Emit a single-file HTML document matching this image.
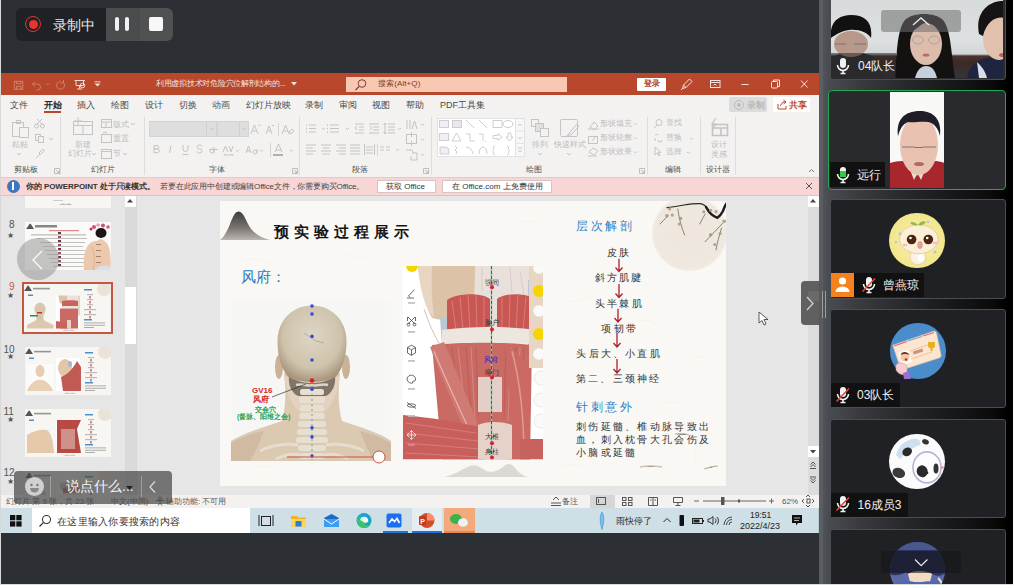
<!DOCTYPE html>
<html><head><meta charset="utf-8">
<style>
*{box-sizing:border-box;margin:0;padding:0}
html,body{width:1013px;height:585px;overflow:hidden;background:#2c2f33;font-family:"Liberation Sans",sans-serif;}
.a{position:absolute}
.t{position:absolute;white-space:nowrap;line-height:1}
</style></head><body>
<div class="a" style="left:0;top:0;width:1px;height:585px;background:#d8d8d8"></div>

<!-- recording widget -->
<div class="a" style="left:16px;top:8px;width:157px;height:33px;border-radius:6px;overflow:hidden;background:#202124">
  <div class="a" style="left:90px;top:0;width:34px;height:33px;background:#4b4c4e"></div>
  <div class="a" style="left:124px;top:0;width:33px;height:33px;background:#505153"></div>
</div>
<div class="a" style="left:25px;top:16px;width:16px;height:16px;border-radius:50%;border:1.5px solid #e03a32"></div>
<div class="a" style="left:28.5px;top:19.5px;width:9px;height:9px;border-radius:50%;background:#e8342d"></div>
<div class="t" style="left:53px;top:17.5px;font-size:14px;color:#e8e8e8">录制中</div>
<div class="a" style="left:115px;top:17.3px;width:4px;height:13.5px;border-radius:2px;background:#f2f2f2"></div>
<div class="a" style="left:125.3px;top:17.3px;width:4px;height:13.5px;border-radius:2px;background:#f2f2f2"></div>
<div class="a" style="left:148.5px;top:17px;width:14px;height:14px;border-radius:2px;background:#f7f7f7"></div>

<!-- PPT window -->
<div class="a" style="left:1px;top:73px;width:818px;height:460px;background:#f3f2f1"></div>
<!-- title bar -->
<div class="a" style="left:1px;top:73px;width:818px;height:22px;background:#b8472b"></div>
<svg class="a" style="left:1px;top:73px" width="818" height="22">
 <g fill="none" stroke="#d0806c" stroke-width="1">
  <rect x="13.3" y="8.3" width="8.5" height="8"/>
  <path d="M15.5 16.3v-3h4.5v3M15.5 8.3v2.5h4.5v-2.5"/>
  <path d="M34 8.5l-2.5 2.5 2.5 2.5M31.5 11h5a3 3 0 0 1 0 6h-1"/>
  <path d="M45 10.5l1.5 1.5 1.5-1.5"/>
  <path d="M62.5 9.5a4 4 0 1 1-3-1.3M62.5 7v3h-3"/>
 </g>
 <g fill="none" stroke="#f2dcd5" stroke-width="1">
  <path d="M73.5 7.5h10.5M75 7.5v5h7.5v-5M78.5 12.5v3M76 16h5"/>
  <circle cx="81.5" cy="12.5" r="2.3"/>
 </g>
 <path d="M93.5 10.5h6l-3 3z" fill="#f2dcd5"/>
 <path d="M93.5 8.8h6" stroke="#f2dcd5" stroke-width="0.9"/>
</svg>
<div class="t" style="left:156px;top:80px;font-size:8px;letter-spacing:-0.27px;color:#f6e4de">利用虚拟技术对危险穴位解剖结构的...</div>
<svg class="a" style="left:291px;top:82px" width="6" height="4"><path d="M0 0h6l-3 3.5z" fill="#f6e4de"/></svg>
<div class="a" style="left:346px;top:77px;width:221px;height:15px;background:#f9c8b3"></div>
<svg class="a" style="left:354px;top:78px" width="14" height="14"><circle cx="8" cy="5.5" r="3.8" fill="none" stroke="#7d3b2c" stroke-width="1"/><path d="M5.2 8.3L1.5 12" stroke="#7d3b2c" stroke-width="1.1"/></svg>
<div class="t" style="left:378px;top:80px;font-size:8px;letter-spacing:0.1px;color:#7d3b2c">搜索(Alt+Q)</div>
<div class="a" style="left:637px;top:78px;width:29px;height:13px;background:#fff;border-radius:1px"></div>
<div class="t" style="left:643.5px;top:80px;font-size:8px;color:#a8402a;font-weight:bold">登录</div>
<svg class="a" style="left:676px;top:74px" width="140" height="20">
 <g fill="none" stroke="#f6e4de" stroke-width="1">
  <path d="M6.5 14.5l1-3.5 6-6 2.5 2.5-6 6zM7.5 11l2.5 2.5M5 16l2-2"/>
  <rect x="34.5" y="6.5" width="9.5" height="7"/><path d="M35 8.5h8.5M37.5 11.5l1.5-1.5 1.5 1.5"/>
  <path d="M65.5 10.5h7"/>
  <rect x="95.5" y="7.5" width="6" height="6.5" rx="1"/><path d="M97.5 7.5v-1.5h6v6.5h-2"/>
  <path d="M125 6.5l6.5 7M131.5 6.5l-6.5 7"/>
 </g>
</svg>

<!-- tabs -->
<div class="t" style="left:10px;top:100.5px;font-size:9px;color:#4a4a4a">文件</div>
<div class="t" style="left:44px;top:100.5px;font-size:9px;color:#262626;font-weight:bold">开始</div>
<div class="a" style="left:44px;top:111px;width:17px;height:2px;background:#b8472b"></div>
<div class="t" style="left:77px;top:100.5px;font-size:9px;color:#4a4a4a">插入</div>
<div class="t" style="left:111px;top:100.5px;font-size:9px;color:#4a4a4a">绘图</div>
<div class="t" style="left:145px;top:100.5px;font-size:9px;color:#4a4a4a">设计</div>
<div class="t" style="left:179px;top:100.5px;font-size:9px;color:#4a4a4a">切换</div>
<div class="t" style="left:212px;top:100.5px;font-size:9px;color:#4a4a4a">动画</div>
<div class="t" style="left:246px;top:100.5px;font-size:9px;color:#4a4a4a">幻灯片放映</div>
<div class="t" style="left:305px;top:100.5px;font-size:9px;color:#4a4a4a">录制</div>
<div class="t" style="left:339px;top:100.5px;font-size:9px;color:#4a4a4a">审阅</div>
<div class="t" style="left:372px;top:100.5px;font-size:9px;color:#4a4a4a">视图</div>
<div class="t" style="left:406px;top:100.5px;font-size:9px;color:#4a4a4a">帮助</div>
<div class="t" style="left:440px;top:100.5px;font-size:9px;color:#4a4a4a">PDF工具集</div>
<div class="a" style="left:729px;top:97px;width:38px;height:15px;background:#dcdcdc;border-radius:2px"></div>
<svg class="a" style="left:733px;top:99px" width="12" height="12"><circle cx="6" cy="6" r="4.5" fill="none" stroke="#bdbdbd"/><circle cx="6" cy="6" r="2" fill="#bdbdbd"/></svg>
<div class="t" style="left:747px;top:100.5px;font-size:9px;color:#b9b9b9;font-weight:bold">录制</div>
<div class="a" style="left:773px;top:97px;width:37px;height:15px;background:#fff;border-radius:2px"></div>
<svg class="a" style="left:777px;top:99px" width="10" height="11"><path d="M1 5v5h8v-3M3 7l3-4h3M6.5 1l2.5 2-2.5 2" fill="none" stroke="#b8472b" stroke-width="1"/></svg>
<div class="t" style="left:789px;top:100.5px;font-size:9px;color:#b8472b;font-weight:bold">共享</div>


<!-- ribbon -->
<svg class="a" style="left:0;top:0" width="819" height="200">
 <g stroke="#dedddc" stroke-width="1"><path d="M60.5 117v58M144.5 117v58M299.5 117v58M431.5 117v58M647.5 117v58M700.5 117v58M735.5 117v58"/></g>
 <g fill="none" stroke="#c4c4c4" stroke-width="1">
  <!-- paste -->
  <rect x="12.5" y="122.5" width="11" height="14"/><rect x="16.5" y="120.5" width="4" height="3"/><rect x="19.5" y="127.5" width="9" height="10" fill="#f3f2f1"/>
  <path d="M17 153l2 2 2-2"/>
  <!-- scissors -->
  <circle cx="36.5" cy="126" r="2"/><circle cx="42.5" cy="126" r="2"/><path d="M37 124l5-5M42 124l-5-5"/>
  <rect x="35.5" y="134.5" width="5" height="6"/><rect x="38.5" y="136.5" width="5" height="6" fill="#f3f2f1"/><path d="M49 138l2 2 2-2"/>
  <path d="M36 158l4-4M39 153l4-4 1.5 1.5-4 4z"/>
  <!-- new slide -->
  <rect x="73.5" y="121.5" width="19" height="13"/><path d="M73.5 125.5h19M83 125.5v9M78 117v8M74 121h8"/>
  <path d="M92 153l2 2 2-2"/>
  <rect x="101.5" y="119.5" width="10" height="8"/><path d="M101.5 122h10M106 122v5.5"/>
  <rect x="101.5" y="134.5" width="10" height="8"/><path d="M103 133a3 3 0 0 1 4 0"/>
  <rect x="101.5" y="149.5" width="10" height="9"/><path d="M101.5 151.5h10"/>
  <path d="M131 123l2 2 2-2M123 153l2 2 2-2"/>
  <!-- font combos -->
  <rect x="149.5" y="121.5" width="67" height="15" fill="#dedede" stroke="#d4d4d4"/>
  <rect x="217.5" y="121.5" width="31" height="15" fill="#dedede" stroke="#d4d4d4"/>
  <path d="M206.5 122v14M239.5 122v14" stroke="#d0d0d0"/>
  <path d="M210 128l2 2 2-2M242 128l2 2 2-2"/>
  <path d="M251 134l3.5-9 3.5 9M252.5 131h4M258 126l1.5-1.5 1.5 1.5"/>
  <path d="M266 134l3-8 3 8M267.5 131h3M272 125l1 1 1-1"/>
  <path d="M278.5 123v13" stroke="#d6d6d6"/>
  <path d="M282 134l3.5-9 3.5 9M283.5 131h4M289 132l3-3 2 2-3 3z"/>
  <!-- B I U S -->
  <path d="M154 145.5h3a1.7 1.7 0 0 1 0 3.5h-3zM154 149h3.5a1.8 1.8 0 0 1 0 3.6h-3.5z"/>
  <path d="M171 145.5l-1.5 7.5"/>
  <path d="M183 145v4a2.5 2.5 0 0 0 5 0v-4M182.5 154.5h6"/>
  <path d="M202 146.5a2.5 2 0 1 0-2.5 2.5a2.5 2 0 1 1-2.5 2.5"/>
  <path d="M209 149.5h9M210 151a2 2 0 1 0 4 0a2 2 0 1 0-4 0M214 147v6"/>
  <path d="M223 152l2.5-6 2.5 6M229 146l2 6 2-6M223.5 155h10M224 155l1.5-1M233 155l-1.5-1M236 150l1.5 1.5 1.5-1.5"/>
  <path d="M246 153l2.5-7 2.5 7M247 151h3M255 150a2 2 0 1 0 0.1 0M257 149v4M260 150l1.5 1.5 1.5-1.5"/>
  <path d="M270.5 143v14" stroke="#d6d6d6"/>
  <path d="M275 152l3.5-8 3.5 8M276 150h5M290 150l1.5 1.5 1.5-1.5"/>
  <rect x="273" y="154" width="10" height="2" fill="#b0b0b0" stroke="none"/>
  <!-- paragraph -->
  <path d="M309 125h7M309 128.5h7M309 132h7M330 125h9M330 128.5h9M330 132h9M322 128l1.5 1.5 1.5-1.5M346 128l1.5 1.5 1.5-1.5"/>
  <path d="M306 125h1M306 128.5h1M306 132h1M327 125h1M327 128.5h1M327 132h1" stroke-width="1.5"/>
  <path d="M355 124h9M359 127h5M359 130h5M355 133h9M357 126l-2 2 2 2"/>
  <path d="M369 124h10M373 127h6M373 130h6M369 133h10M370 126l2 2-2 2"/>
  <path d="M388 124h7M388 127h7M388 130h7M388 133h7M385 123v11M383.5 125l1.5-2 1.5 2M383.5 132l1.5 2 1.5-2M398 128l1.5 1.5 1.5-1.5"/>
  <path d="M306 145h10M306 148h7M306 151h10M306 154h7"/>
  <path d="M321 145h10M322.5 148h7M321 151h10M322.5 154h7"/>
  <path d="M336 145h10M339 148h7M336 151h10M339 154h7"/>
  <path d="M350 145h10M350 148h10M350 151h10M350 154h10"/>
  <path d="M364.5 144v11M374.5 144v11M366 147h7M366 150h7M366 153h7"/>
  <path d="M377.5 144v12" stroke="#d6d6d6"/>
  <path d="M380 147h4M386 147h4M380 150h4M386 150h4M396 149l1.5 1.5 1.5-1.5"/>
  <path d="M407 120v9M410 120v9M412 129l2.5-8 2.5 8M421 124l1.5 1.5 1.5-1.5"/>
  <rect x="406.5" y="134.5" width="10" height="9"/><path d="M411.5 132v5M411.5 141v5M421 139l1.5 1.5 1.5-1.5"/>
  <path d="M406 150h6l2 3M412 153h5v7h-6v-4M421 154l1.5 1.5 1.5-1.5"/>
  <!-- gallery -->
  <rect x="437.5" y="118.5" width="78" height="38" fill="#fff" stroke="#e2e2e2"/>
  <rect x="515.5" y="118.5" width="9" height="38" fill="#f7f7f7" stroke="#e2e2e2"/>
  <path d="M515.5 131h9M515.5 143.5h9" stroke="#e2e2e2"/>
  <path d="M518 126l2-2 2 2M518 137l2 2 2-2M518 148h4M518 150l2 2 2-2" stroke="#c8c8c8"/>
  <g stroke="#d0cdd2">
  <rect x="439.5" y="120.5" width="9" height="7" fill="#f3eef3"/><rect x="452.5" y="120.5" width="9" height="7" fill="#ede6ee"/>
  <path d="M466 120l8 8M479 120l8 8M493 120.5h9v7h-9z"/><ellipse cx="508" cy="124" rx="5" ry="3.5"/>
  <rect x="439.5" y="133.5" width="9" height="7" fill="#f3eef3"/>
  <path d="M452 141l4.5-8 4.5 8z M466 134h4v7h5M479 134h4v7M485 141l1 1M493 135.5h5v-2l4 3.5-4 3.5v-2h-5z M508 133h3v4h2l-3.5 4-3.5-4h2z"/>
  <path d="M440 147h5a4 4 0 0 1 4 4v3h-9z" fill="#f3eef3"/>
  <path d="M455 146l2 2-2 2 2 2-1 2M466 147a8 8 0 0 1 7 7M479 154a4 7 0 0 1 8 0M495 146a1.5 1.5 0 0 0-1.5 1.5v2l-1 1 1 1v2a1.5 1.5 0 0 0 1.5 1.5M507 146a1.5 1.5 0 0 1 1.5 1.5v2l1 1-1 1v2a1.5 1.5 0 0 1-1.5 1.5"/>
  </g>
  <!-- arrange / quick style -->
  <rect x="531.5" y="119.5" width="7" height="7"/><rect x="535.5" y="123.5" width="8" height="8" fill="#e0e0e0"/><rect x="540.5" y="128.5" width="8" height="8" fill="#f3f2f1"/>
  <path d="M538 153l2 2 2-2"/>
  <rect x="560.5" y="119.5" width="17" height="17" rx="1"/><path d="M567 136l3-4 7-8 2 2-7 8z" />
  <path d="M567 153l2 2 2-2"/>
  <path d="M590 127l4-5 4 4-4 4zM588 129h11" /><path d="M600 124l0 0"/>
  <rect x="588.5" y="136.5" width="9" height="7"/><path d="M592 141l4-5"/>
  <path d="M589 152l4-4 5 3-4 4zM588 156h9"/>
  <path d="M634 123.5l1.5 1.5 1.5-1.5M634 137.5l1.5 1.5 1.5-1.5M634 151.5l1.5 1.5 1.5-1.5"/>
  <!-- edit -->
  <circle cx="659" cy="122.5" r="3"/><path d="M657 125l-3 3"/>
  <path d="M655 135a2 2 0 0 1 3 0M655 138v3M658 140a2 2 0 1 0 4 0M690 138l1.5 1.5 1.5-1.5"/>
  <path d="M655 147v8l2-2 2 3 1-1-2-2.5h3z"/>
  <path d="M687 152l1.5 1.5 1.5-1.5"/>
  <!-- designer -->
  <path d="M712.5 124.5h15v11h-15zM712.5 128h15M721 128v7.5" stroke-width="1.6"/><path d="M716 118l-4 6h4l-4 6" stroke-width="1.2"/>
  <path d="M809 172l2.5-2.5 2.5 2.5" stroke="#777"/>
  
  <path d="M54.5 168.5h5v5h-5zM56.0 170.0l3 3M59.0 171.0v2h-2M292.5 168.5h5v5h-5zM294.0 170.0l3 3M297.0 171.0v2h-2M423.5 168.5h5v5h-5zM425.0 170.0l3 3M428.0 171.0v2h-2M639.5 168.5h5v5h-5zM641.0 170.0l3 3M644.0 171.0v2h-2" stroke="#b0b0b0" stroke-width="0.8"/>
 </g>
</svg>
<div class="t" style="left:11.5px;top:141px;font-size:8px;color:#bdbdbd">粘贴</div>
<div class="t" style="left:75px;top:140.5px;font-size:8px;color:#bdbdbd">新建</div>
<div class="t" style="left:68px;top:150px;font-size:8px;color:#bdbdbd">幻灯片</div>
<div class="t" style="left:113px;top:120.5px;font-size:8px;color:#bdbdbd">版式</div>
<div class="t" style="left:113px;top:135px;font-size:8px;color:#bdbdbd">重置</div>
<div class="t" style="left:113px;top:150px;font-size:8px;color:#bdbdbd">节</div>
<div class="t" style="left:532px;top:140.5px;font-size:8px;color:#bdbdbd">排列</div>
<div class="t" style="left:554px;top:140.5px;font-size:8px;color:#bdbdbd">快速样式</div>
<div class="t" style="left:600px;top:119.5px;font-size:8px;color:#bdbdbd">形状填充</div>
<div class="t" style="left:600px;top:133.7px;font-size:8px;color:#bdbdbd">形状轮廓</div>
<div class="t" style="left:600px;top:148px;font-size:8px;color:#bdbdbd">形状效果</div>
<div class="t" style="left:666px;top:119.2px;font-size:8px;color:#bdbdbd">查找</div>
<div class="t" style="left:666px;top:134px;font-size:8px;color:#bdbdbd">替换</div>
<div class="t" style="left:666px;top:147.5px;font-size:8px;color:#bdbdbd">选择</div>
<div class="t" style="left:711px;top:140.5px;font-size:8px;color:#bdbdbd">设计</div>
<div class="t" style="left:711px;top:150.5px;font-size:8px;color:#bdbdbd">灵感</div>
<div class="t" style="left:14px;top:166px;font-size:8px;color:#505050">剪贴板</div>
<div class="t" style="left:91px;top:166px;font-size:8px;color:#505050">幻灯片</div>
<div class="t" style="left:209px;top:166px;font-size:8px;color:#505050">字体</div>
<div class="t" style="left:352px;top:166px;font-size:8px;color:#505050">段落</div>
<div class="t" style="left:526px;top:166px;font-size:8px;color:#505050">绘图</div>
<div class="t" style="left:665px;top:166px;font-size:8px;color:#505050">编辑</div>
<div class="t" style="left:706px;top:166px;font-size:8px;color:#505050">设计器</div>

<!-- info bar -->
<div class="a" style="left:1px;top:176.5px;width:818px;height:19px;background:#f8d6d6;border-top:1px solid #eec4c4;border-bottom:1px solid #e9bdbd"></div>
<div class="a" style="left:6.7px;top:179.7px;width:13px;height:13px;border-radius:50%;background:#3a78c2"></div>
<div class="a" style="left:12.3px;top:184.3px;width:2px;height:5.7px;background:#fff"></div><div class="a" style="left:12.3px;top:181.8px;width:2px;height:1.8px;background:#fff"></div>
<div class="t" style="left:26px;top:183px;font-size:8px;letter-spacing:-0.1px;color:#333;font-weight:bold">你的 POWERPOINT 处于只读模式。</div>
<div class="t" style="left:160px;top:183px;font-size:8px;letter-spacing:-0.16px;color:#444">若要在此应用中创建或编辑Office文件，你需要购买Office。</div>
<div class="a" style="left:377px;top:180px;width:59px;height:12.5px;background:#fff;border:1px solid #d9c4c4"></div>
<div class="t" style="left:386px;top:183px;font-size:8px;color:#333">获取 Office</div>
<div class="a" style="left:442px;top:180px;width:110px;height:12.5px;background:#fff;border:1px solid #d9c4c4"></div>
<div class="t" style="left:452px;top:183px;font-size:8px;color:#333">在 Office.com 上免费使用</div>
<svg class="a" style="left:805px;top:182px" width="8" height="8"><path d="M1 1l6 6M7 1l-6 6" stroke="#555" stroke-width="1"/></svg>


<!-- main area -->
<div class="a" style="left:1px;top:195.5px;width:818px;height:299px;background:#e6e6e6"></div>
<!-- thumbnails scrollbar -->
<div class="a" style="left:124.5px;top:195.5px;width:11px;height:299px;background:#dadada"></div>
<div class="a" style="left:124.5px;top:195.5px;width:11px;height:11px;background:#fff"></div>
<svg class="a" style="left:127px;top:199px" width="6" height="4"><path d="M0 3.5h6L3 0z" fill="#444"/></svg>
<div class="a" style="left:124.5px;top:287px;width:11px;height:57px;background:#fff"></div>
<div class="a" style="left:136px;top:195.5px;width:1px;height:299px;background:#d8d8d8"></div>
<!-- main scrollbar -->
<div class="a" style="left:807.5px;top:195.5px;width:11px;height:299px;background:#dcdcdc"></div>
<div class="a" style="left:807.5px;top:195.5px;width:11px;height:11px;background:#fff"></div>
<svg class="a" style="left:810px;top:199px" width="6" height="4"><path d="M0 3.5h6L3 0z" fill="#444"/></svg>
<div class="a" style="left:807.5px;top:446px;width:11px;height:11px;background:#fff"></div>
<svg class="a" style="left:810px;top:450px" width="6" height="4"><path d="M0 0h6L3 3.5z" fill="#444"/></svg>
<svg class="a" style="left:809px;top:459px" width="8" height="30"><g fill="none" stroke="#555" stroke-width="1"><path d="M1.5 5.5l2.5-2.5 2.5 2.5M1.5 8l2.5-2.5 2.5 2.5M1 9.5h6"/><path d="M1.5 19l2.5 2.5 2.5-2.5M1.5 21.5l2.5 2.5 2.5-2.5M1 18h6"/></g></svg>

<!-- thumbnails -->
<svg class="a" style="left:25px;top:195.5px" width="86" height="12.5"><rect width="86" height="12.5" fill="#f8f6f2"/><path d="M34 9 C37 7 39 7 41 8.5 C43 7 45 7 47 9Z" fill="#bbb"/><rect x="28" y="4" width="10" height="1" fill="#ccc"/></svg>
<div class="t" style="left:9px;top:220px;font-size:10px;color:#555">8</div>
<div class="t" style="left:7px;top:232px;font-size:8px;color:#555">★</div>
<svg class="a" style="left:24.5px;top:221.5px" width="86.5" height="48.5">
 <rect width="86.5" height="48.5" fill="#fbfaf8"/>
 <path d="M1 7 C3 5 4 2 5 1.5 C6 1.5 7 4 9 7Z" fill="#555"/>
 <rect x="10" y="3" width="22" height="2.5" fill="#555" opacity="0.7"/>
 <rect x="24" y="8" width="30" height="1.2" fill="#d88" />
 <g fill="#999"><rect x="6" y="12.5" width="55" height="0.8"/><rect x="12" y="16" width="50" height="0.6"/><rect x="15" y="20" width="45" height="0.6"/><rect x="18" y="24" width="40" height="0.6"/><rect x="20" y="28" width="40" height="0.6"/><rect x="22" y="32" width="38" height="0.6"/><rect x="24" y="36" width="36" height="0.6"/><rect x="26" y="40" width="34" height="0.6"/><rect x="28" y="44" width="30" height="0.6"/></g>
 <g fill="#5a3b4a"><rect x="33" y="10" width="3" height="2"/><rect x="33" y="14" width="3" height="2" fill="#c04060"/><rect x="33" y="18" width="3" height="2"/><rect x="33" y="22" width="3" height="2" fill="#c04060"/><rect x="33" y="26" width="3" height="2"/><rect x="33" y="30" width="3" height="2" fill="#c04060"/><rect x="33" y="34" width="3" height="2"/><rect x="33" y="38" width="3" height="2" fill="#c04060"/><rect x="33" y="42" width="3" height="2"/></g>
 <path d="M59 48 C58 40 59 30 62 25 C64 21 68 19 72 19 C74 17 76 16 78 18 C82 20 84 24 85 30 C86 38 86 44 85 48Z" fill="#ecc8ac"/>
 <path d="M66 24 C70 30 70 40 68 48" stroke="#d9ae90" stroke-width="0.8" fill="none"/>
 <path d="M70 48 C72 44 78 43 84 44 L86 48Z" fill="#d8e0ee"/>
 <ellipse cx="76" cy="11" rx="5.5" ry="5" fill="#1c1414"/>
 <g><circle cx="69" cy="5" r="2" fill="#d85070"/><circle cx="73" cy="3" r="1.8" fill="#e8a0b0"/><circle cx="78" cy="3.5" r="2" fill="#c05080"/><circle cx="83" cy="5" r="1.8" fill="#d06070"/><circle cx="66" cy="7" r="1.5" fill="#b04050"/></g>
 <g fill="#6a4a3a" opacity="0.6"><rect x="71" y="22" width="5" height="0.9"/><rect x="71" y="28" width="5" height="0.9"/><rect x="71" y="34" width="5" height="0.9"/><rect x="71" y="40" width="5" height="0.9"/></g>
</svg>
<div class="a" style="left:22.2px;top:281.6px;width:90.7px;height:52.8px;border:2px solid #c4573f"></div>
<div class="t" style="left:9px;top:282px;font-size:10px;color:#c75a3c">9</div>
<div class="t" style="left:7px;top:292px;font-size:8px;color:#555">★</div>
<svg class="a" style="left:24.2px;top:283.6px" width="86.5" height="48.8"><rect width="86.5" height="48.8" fill="#f8f6f2"/><circle cx="80" cy="5" r="7" fill="#ece3d8"/><path d="M0 7 C2 5 3 2 4 1.5 C5 1.5 6 4 8 7Z" fill="#555"/><rect x="9" y="3.8" width="17" height="1.6" fill="#555" opacity="0.6"/><rect x="4" y="10.5" width="5" height="1.5" fill="#4a8fd0"/><rect x="3" y="17.5" width="26.5" height="27" fill="#f7f7f6"/><path d="M3 44.5 L3 41 C8 38 12 37 13 35 L19 35 C20 37 24 38 29.5 41 L29.5 44.5Z" fill="#dcc8ae"/><rect x="12.5" y="30" width="7" height="6" fill="#d8c4aa"/><ellipse cx="16" cy="25.5" rx="5.5" ry="7" fill="#d6c8b0"/><rect x="32" y="11.5" width="24" height="33" fill="#fff"/><path d="M34.5 11.5 L43 11.5 L43 19 C40 20 37 20 35.5 19Z" fill="#dcc3a8"/><path d="M43 11.5 L54 11.5 L54 19 L43 19Z" fill="#ebe0dc"/><path d="M38 17 C42 16 52 16 54 17 L54 22 L38 22Z" fill="#c9625e"/><rect x="38" y="22" width="16" height="2.5" fill="#ece4dc"/><path d="M36 24.5 L54 24.5 L54 44.5 L36 44.5Z" fill="#c96a66"/><path d="M32 37 L44 39 L44 44.5 L32 44.5Z" fill="#c8625e"/><rect x="43" y="36" width="4" height="8.5" fill="#e6d2c8"/><rect x="54" y="11.5" width="2" height="20" fill="#e9d6c2"/><rect x="13" y="28" width="5" height="1.5" fill="#d42a20"/><rect x="6" y="31" width="8" height="1.5" fill="#2a9050"/><rect x="60" y="5" width="8" height="1.5" fill="#4a8fd0"/><rect x="63.0" y="10" width="6" height="1.2" fill="#888" opacity="0.55"/><rect x="65.5" y="12" width="1" height="2.5" fill="#b01e2e"/><rect x="63.0" y="15" width="6" height="1.2" fill="#888" opacity="0.55"/><rect x="65.5" y="17" width="1" height="2.5" fill="#b01e2e"/><rect x="63.0" y="20" width="6" height="1.2" fill="#888" opacity="0.55"/><rect x="65.5" y="22" width="1" height="2.5" fill="#b01e2e"/><rect x="60.0" y="25" width="12" height="1.2" fill="#888" opacity="0.55"/><rect x="65.5" y="27" width="1" height="2.5" fill="#b01e2e"/><rect x="60.0" y="30" width="12" height="1.2" fill="#888" opacity="0.55"/><rect x="65.5" y="32" width="1" height="2.5" fill="#b01e2e"/><rect x="60" y="35" width="8" height="1.5" fill="#4a8fd0"/><rect x="60" y="38.5" width="21" height="0.8" fill="#999"/><rect x="60" y="40.8" width="21" height="0.8" fill="#999"/><rect x="60" y="43" width="10" height="0.8" fill="#999"/><path d="M38 47 C41 45 43 45 45 46.5 C47 45 49 45 51 47Z" fill="#ccc"/></svg>
<div class="t" style="left:3.5px;top:344.5px;font-size:10px;color:#555">10</div>
<div class="t" style="left:7px;top:353px;font-size:8px;color:#555">★</div>
<svg class="a" style="left:24.5px;top:346.5px" width="86" height="48"><rect width="86" height="48" fill="#f8f6f2"/><circle cx="80" cy="5" r="7" fill="#ece3d8"/><path d="M0 7 C2 5 3 2 4 1.5 C5 1.5 6 4 8 7Z" fill="#555"/><rect x="9" y="3.8" width="17" height="1.6" fill="#555" opacity="0.6"/><rect x="4" y="10.5" width="5" height="1.5" fill="#4a8fd0"/><rect x="2" y="17" width="27" height="27" fill="#f6f6f5"/><rect x="2" y="17" width="27" height="27" fill="#fbfbfa"/><ellipse cx="15" cy="24" rx="4.5" ry="6" fill="#e6cdb0"/><path d="M2 44 C4 38 8 35 12 33 L18 33 C22 35 26 38 28 44Z" fill="#e8d0b4"/><rect x="31" y="11" width="24" height="33" fill="#fff"/><ellipse cx="40" cy="21" rx="7" ry="9" fill="#e2c6a8"/><path d="M36 30 C42 28 48 22 52 14 L56 20 L56 44 L38 44Z" fill="#c05a54"/><ellipse cx="45" cy="17" rx="2" ry="3" fill="#9fb8d6"/><rect x="60" y="5" width="8" height="1.5" fill="#4a8fd0"/><rect x="63.0" y="10" width="6" height="1.2" fill="#888" opacity="0.55"/><rect x="65.5" y="12" width="1" height="2.5" fill="#b01e2e"/><rect x="63.0" y="15" width="6" height="1.2" fill="#888" opacity="0.55"/><rect x="65.5" y="17" width="1" height="2.5" fill="#b01e2e"/><rect x="63.0" y="20" width="6" height="1.2" fill="#888" opacity="0.55"/><rect x="65.5" y="22" width="1" height="2.5" fill="#b01e2e"/><rect x="60.0" y="25" width="12" height="1.2" fill="#888" opacity="0.55"/><rect x="65.5" y="27" width="1" height="2.5" fill="#b01e2e"/><rect x="60.0" y="30" width="12" height="1.2" fill="#888" opacity="0.55"/><rect x="65.5" y="32" width="1" height="2.5" fill="#b01e2e"/><rect x="60" y="35" width="8" height="1.5" fill="#4a8fd0"/><rect x="60" y="38.5" width="21" height="0.8" fill="#999"/><rect x="60" y="40.8" width="21" height="0.8" fill="#999"/><rect x="60" y="43" width="10" height="0.8" fill="#999"/><path d="M38 47 C41 45 43 45 45 46.5 C47 45 49 45 51 47Z" fill="#ccc"/></svg>
<div class="t" style="left:3.5px;top:407px;font-size:10px;color:#555">11</div>
<div class="t" style="left:7px;top:416px;font-size:8px;color:#555">★</div>
<svg class="a" style="left:24.5px;top:408.8px" width="86" height="48"><rect width="86" height="48" fill="#f8f6f2"/><circle cx="80" cy="5" r="7" fill="#ece3d8"/><path d="M0 7 C2 5 3 2 4 1.5 C5 1.5 6 4 8 7Z" fill="#555"/><rect x="9" y="3.8" width="17" height="1.6" fill="#555" opacity="0.6"/><rect x="4" y="10.5" width="5" height="1.5" fill="#4a8fd0"/><rect x="2" y="17" width="27" height="27" fill="#f6f6f5"/><path d="M2 44 L2 26 C8 22 16 20 22 21 C26 24 28 30 29 44Z" fill="#e6c9aa"/><rect x="31" y="11" width="24" height="33" fill="#fff"/><path d="M32 11 L56 11 L52 20 L56 44 L32 44Z" fill="#b84a46"/><path d="M36 20 L50 20 L50 40 L36 40Z" fill="#e8d8d0" opacity="0.5"/><rect x="60" y="5" width="8" height="1.5" fill="#4a8fd0"/><rect x="63.0" y="10" width="6" height="1.2" fill="#888" opacity="0.55"/><rect x="65.5" y="12" width="1" height="2.5" fill="#b01e2e"/><rect x="63.0" y="15" width="6" height="1.2" fill="#888" opacity="0.55"/><rect x="65.5" y="17" width="1" height="2.5" fill="#b01e2e"/><rect x="63.0" y="20" width="6" height="1.2" fill="#888" opacity="0.55"/><rect x="65.5" y="22" width="1" height="2.5" fill="#b01e2e"/><rect x="60.0" y="25" width="12" height="1.2" fill="#888" opacity="0.55"/><rect x="65.5" y="27" width="1" height="2.5" fill="#b01e2e"/><rect x="60.0" y="30" width="12" height="1.2" fill="#888" opacity="0.55"/><rect x="65.5" y="32" width="1" height="2.5" fill="#b01e2e"/><rect x="60" y="35" width="8" height="1.5" fill="#4a8fd0"/><rect x="60" y="38.5" width="21" height="0.8" fill="#999"/><rect x="60" y="40.8" width="21" height="0.8" fill="#999"/><rect x="60" y="43" width="10" height="0.8" fill="#999"/><path d="M38 47 C41 45 43 45 45 46.5 C47 45 49 45 51 47Z" fill="#ccc"/></svg>
<div class="t" style="left:3.5px;top:467.5px;font-size:10px;color:#555">12</div>
<div class="t" style="left:7px;top:478px;font-size:8px;color:#555">★</div>
<div class="a" style="left:24.5px;top:470.5px;width:86px;height:24px;overflow:hidden"><svg class="a" style="left:0px;top:0px" width="86" height="48"><rect width="86" height="48" fill="#f8f6f2"/><circle cx="80" cy="5" r="7" fill="#ece3d8"/><path d="M0 7 C2 5 3 2 4 1.5 C5 1.5 6 4 8 7Z" fill="#555"/><rect x="9" y="3.8" width="17" height="1.6" fill="#555" opacity="0.6"/><rect x="4" y="10.5" width="5" height="1.5" fill="#4a8fd0"/><rect x="3" y="17.5" width="26.5" height="27" fill="#f7f7f6"/><path d="M3 44.5 L3 41 C8 38 12 37 13 35 L19 35 C20 37 24 38 29.5 41 L29.5 44.5Z" fill="#dcc8ae"/><rect x="12.5" y="30" width="7" height="6" fill="#d8c4aa"/><ellipse cx="16" cy="25.5" rx="5.5" ry="7" fill="#d6c8b0"/><rect x="32" y="11.5" width="24" height="33" fill="#fff"/><path d="M34.5 11.5 L43 11.5 L43 19 C40 20 37 20 35.5 19Z" fill="#dcc3a8"/><path d="M43 11.5 L54 11.5 L54 19 L43 19Z" fill="#ebe0dc"/><path d="M38 17 C42 16 52 16 54 17 L54 22 L38 22Z" fill="#c9625e"/><rect x="38" y="22" width="16" height="2.5" fill="#ece4dc"/><path d="M36 24.5 L54 24.5 L54 44.5 L36 44.5Z" fill="#c96a66"/><path d="M32 37 L44 39 L44 44.5 L32 44.5Z" fill="#c8625e"/><rect x="43" y="36" width="4" height="8.5" fill="#e6d2c8"/><rect x="54" y="11.5" width="2" height="20" fill="#e9d6c2"/><rect x="13" y="28" width="5" height="1.5" fill="#d42a20"/><rect x="6" y="31" width="8" height="1.5" fill="#2a9050"/><rect x="60" y="5" width="8" height="1.5" fill="#4a8fd0"/><rect x="63.0" y="10" width="6" height="1.2" fill="#888" opacity="0.55"/><rect x="65.5" y="12" width="1" height="2.5" fill="#b01e2e"/><rect x="63.0" y="15" width="6" height="1.2" fill="#888" opacity="0.55"/><rect x="65.5" y="17" width="1" height="2.5" fill="#b01e2e"/><rect x="63.0" y="20" width="6" height="1.2" fill="#888" opacity="0.55"/><rect x="65.5" y="22" width="1" height="2.5" fill="#b01e2e"/><rect x="60.0" y="25" width="12" height="1.2" fill="#888" opacity="0.55"/><rect x="65.5" y="27" width="1" height="2.5" fill="#b01e2e"/><rect x="60.0" y="30" width="12" height="1.2" fill="#888" opacity="0.55"/><rect x="65.5" y="32" width="1" height="2.5" fill="#b01e2e"/><rect x="60" y="35" width="8" height="1.5" fill="#4a8fd0"/><rect x="60" y="38.5" width="21" height="0.8" fill="#999"/><rect x="60" y="40.8" width="21" height="0.8" fill="#999"/><rect x="60" y="43" width="10" height="0.8" fill="#999"/><path d="M38 47 C41 45 43 45 45 46.5 C47 45 49 45 51 47Z" fill="#ccc"/></svg></div>


<!-- slide -->
<div class="a" style="left:220px;top:201px;width:506px;height:284.5px;background:#f9f8f4;overflow:hidden">
<svg class="a" style="left:0;top:0" width="506" height="285">
 <defs>
  <linearGradient id="mtn" x1="0" y1="0" x2="0" y2="1"><stop offset="0" stop-color="#2e2a2a"/><stop offset="0.55" stop-color="#6b6662"/><stop offset="1" stop-color="#b5b0aa"/></linearGradient>
  <radialGradient id="skull" cx="0.5" cy="0.4" r="0.6"><stop offset="0" stop-color="#ddd6c6"/><stop offset="0.7" stop-color="#cfc3ac"/><stop offset="1" stop-color="#a8967c"/></radialGradient>
  <linearGradient id="skin" x1="0" y1="0" x2="0" y2="1"><stop offset="0" stop-color="#d9c2a6"/><stop offset="1" stop-color="#e6d3bc"/></linearGradient>
  <radialGradient id="moon" cx="0.5" cy="0.5" r="0.5"><stop offset="0" stop-color="#eee6dc"/><stop offset="0.93" stop-color="#efe8df"/><stop offset="1" stop-color="#f2ede6"/></radialGradient>
 </defs>
 <!-- paper fibers -->
 <g stroke="#e8e2d8" stroke-width="0.5" fill="none" opacity="0.5">
  <path d="M20 60q15 -5 30 2M120 50q10 8 25 6M300 20q12 4 20 -3M250 70q8 10 22 8M200 95q-10 6 -18 16M420 120q10 -3 18 4M470 150q6 8 16 6M340 265q14 -4 26 3M30 270q10 -8 22 -4M480 240q-8 10 -4 20M150 30q10 3 14 10M60 150q-6 10 2 18M350 100q10 2 20 -6M440 200q12 4 20 0"/>
 </g>
 <path d="M190 230l14 -1" stroke="#cfc2ae" stroke-width="1.2"/>
 <path d="M420 266q10 -2 22 0" stroke="#d2c4ae" stroke-width="1.4"/>
 <path d="M188 230q10 -1 22 0" stroke="#c9b89c" stroke-width="1.2"/>
 <path d="M455 233q8 -1 14 1" stroke="#c9b89c" stroke-width="1.2"/>
 <path d="M484 268q8 -3 14 -3" stroke="#c9b89c" stroke-width="1.2"/>
 <!-- top-left mountain -->
 <path d="M0 39 C3 37 7 31 10 23 C13 15 15.5 10.5 18.5 10.5 C21.5 10.5 24 14 27 21 C31 30 38 36 50 39 Z" fill="url(#mtn)" opacity="0.92"/>
 <!-- moon -->
 <circle cx="469.5" cy="32.5" r="37.5" fill="url(#moon)"/>
 <!-- branch -->
 <g fill="none" stroke-linecap="round">
  <path d="M447 6.6 C452 6 458 5 464 4 C470 3 476 2.4 480 2.6 C484 3 486 5 488 8 C490 12 493 15 497.4 16.8" stroke="#2e2824" stroke-width="1.2"/>
  <path d="M486 6 C488 10 492 15 497.4 16.8 C500 15 502 12 503 10 C504 7 505 4 507 2" stroke="#221c18" stroke-width="2.4"/>
  <path d="M448 14.8 L440 23 M457.8 8 C459 16 461 26 464.6 33.9 M485.1 13 L479.6 23 M502.9 22 L485.1 40.7 M501.5 27 C499 36 497 42 496 48.9" stroke="#4a4038" stroke-width="0.6"/>
 </g>
 <g fill="#a8987a" opacity="0.85">
  <circle cx="449.6" cy="7.9" r="1.6"/><circle cx="446.9" cy="14.8" r="1.8"/><circle cx="452.3" cy="14.1" r="1.6"/><circle cx="460.5" cy="17.5" r="1.8"/><circle cx="459.2" cy="23" r="1.5"/><circle cx="483.7" cy="10.7" r="1.5"/><circle cx="490.6" cy="9.3" r="1.6"/><circle cx="496" cy="10.7" r="1.6"/><circle cx="504.2" cy="20.2" r="1.8"/><circle cx="490.6" cy="33.9" r="1.8"/><circle cx="494.7" cy="43.4" r="1.5"/><circle cx="500.1" cy="32.5" r="1.5"/>
 </g>
 <!-- bottom mountains -->
 <path d="M224 276 C235 274 242 268 250 265 C256 263 260 266 266 270 C272 272 278 270 283 266 C287 262 291 262 295 267 C299 272 303 275 308 276 Z" fill="#d6d3ce" opacity="0.85"/>

 <!-- head image -->
 <rect x="11" y="100" width="160" height="160" fill="#f6f6f5"/>
 <path d="M11 260 L11 240 C24 232 44 226 62 220 C66 205 66 190 64 172 L120 172 C118 190 118 205 122 220 C140 226 160 232 171 240 L171 260 Z" fill="#dcc9b2"/>
 <path d="M64 175 C68 200 76 214 92 214 C108 214 116 200 120 175 Z" fill="#e3d5c2" opacity="0.8"/>
 <path d="M11 260 L11 242 C22 236 32 232 44 230 C40 240 36 250 30 260Z" fill="#cdb89e" opacity="0.8"/>
 <path d="M171 260 L171 242 C160 236 150 232 140 230 C144 240 148 250 154 260Z" fill="#cdb89e" opacity="0.8"/>
 <ellipse cx="59" cy="166" rx="4" ry="12" fill="#cbb296"/>
 <ellipse cx="126" cy="166" rx="4" ry="12" fill="#cbb296"/>
 <path d="M92 104.5 C72 104.5 57.5 120 57.5 140 C57.5 156 61 166 68 176 C76 180 86 181 92 181 C98 181 108 180 116 176 C123 166 126.5 156 126.5 140 C126.5 120 112 104.5 92 104.5 Z" fill="url(#skull)"/>
 <path d="M69 176 C78 181 86 182 92 182 C98 182 106 181 115 176 C116 184 112 192 106 195 L78 195 C72 192 68 184 69 176Z" fill="#6f6456" opacity="0.85"/>
 <path d="M76 184 C82 182 88 186 92 184 C96 186 102 182 108 184" stroke="#ddd6c8" stroke-width="2.5" fill="none"/>
 <g fill="#e6e0d2">
  <rect x="80" y="188" width="24" height="6" rx="2.5"/><rect x="79" y="196" width="26" height="6" rx="2.5"/><rect x="80" y="204" width="24" height="6" rx="2.5"/><rect x="79" y="212" width="26" height="6" rx="2.5"/><rect x="78" y="220" width="28" height="6" rx="2.5"/><rect x="77" y="228" width="30" height="6" rx="2.5"/><rect x="76" y="236" width="32" height="6" rx="2.5"/><rect x="78" y="244" width="28" height="6" rx="2.5"/><rect x="80" y="252" width="24" height="6" rx="2.5"/>
 </g>
 <path d="M92 188 V259" stroke="#9a8e7c" stroke-width="1" stroke-dasharray="2 3"/>
 <path d="M40 250 C52 244 66 242 78 244 M144 250 C132 244 118 242 106 244 M56 258 C64 254 72 252 80 254 M128 258 C120 254 112 252 104 254" stroke="#e4ddd0" stroke-width="3" fill="none"/>
 <path d="M84 132l12 8 8 2" stroke="#a89478" stroke-width="0.6" fill="none"/>
 <path d="M52 196 L86 183" stroke="#333" stroke-width="0.7"/>
 <g fill="#3a46e0">
  <circle cx="92" cy="105" r="1.8"/><circle cx="92" cy="113" r="1.8"/><circle cx="92" cy="135.4" r="1.8"/><circle cx="92" cy="159" r="1.8"/><circle cx="92" cy="188.3" r="1.8"/><circle cx="92" cy="226.7" r="1.8"/><circle cx="92" cy="236" r="1.8"/><circle cx="92" cy="255" r="1.8"/>
 </g>
 <circle cx="92" cy="179.6" r="2.4" fill="#e02020"/>
 <path d="M67 256 H153" stroke="#d05040" stroke-width="1"/>
 <circle cx="159" cy="256" r="6" fill="#fff" stroke="#d05040" stroke-width="1"/>

 <!-- muscle image -->
 <clipPath id="mclip"><rect x="183" y="65" width="140" height="193.5"/></clipPath>
 <g clip-path="url(#mclip)">
 <rect x="183" y="65" width="140" height="193.5" fill="#ffffff"/>
 <path d="M250 65 L317 65 L317 140 L225 140 C235 120 246 95 250 65 Z" fill="#e9dfdb"/>
 <path d="M262 66 L262 90 M290 66 L292 92 M300 70 L304 95" stroke="#d8ccc8" stroke-width="1"/>
 <path d="M198 65 L255 65 C255 85 254 105 250 118 C240 121 224 120 212 117 C205 105 200 85 198 65 Z" fill="#dcc3a8"/>
 <path d="M198 65 L212 65 C211 85 212 100 214 116 C206 110 200 90 198 65 Z" fill="#e8d6c2"/>
 <path d="M220 117 L234 117 L234 145 L222 145 Z" fill="#b8c8d6"/>
 <path d="M308 79 L317 79 L317 145 L308 145 Z" fill="#b8c8d6"/>
 <path d="M204 108 C210 125 216 140 226 152" stroke="#c9b29c" stroke-width="0.8" fill="none"/>
 <path d="M227 99 C236 92 262 91 270 98 L270 131 C258 133 238 133 227 131 Z" fill="#c95854"/>
 <path d="M277 98 C286 91 308 92 317 99 L317 131 C304 133 288 133 277 131 Z" fill="#c95854"/>
 <g stroke="#e49a92" stroke-width="0.8" opacity="0.7"><path d="M232 100l4 30M240 96l3 34M248 94l2 36M256 94l1 36M264 96l0 34M282 96l0 34M290 94l-1 36M298 94l-2 36M306 96l-3 34M313 99l-3 32"/></g>
 <path d="M222 129 C250 125 290 125 317 129 L317 144 C300 141 280 145 270 142 C255 145 240 141 222 145 Z" fill="#ede6de"/>
 <path d="M212 144 C240 141 290 141 312 144 L310 258.5 L222 258.5 Z" fill="#ca6a65"/>
 <g stroke="#b04844" stroke-width="1.2" opacity="0.35"><path d="M232 146l10 80M246 146l6 76M256 146l2 70M286 146l-2 70M296 146l-4 76M304 146l-4 80"/></g>
 <g stroke="#e6a8a0" stroke-width="0.8" opacity="0.6"><path d="M238 146l9 80M251 146l4 74M291 146l-3 74M300 146l-4 80"/></g>
 <path d="M258 176 L282 176 L282 211 L258 211 Z" fill="#e2d0c8"/>
 <path d="M210 146 L224 141 C236 170 248 198 258 224 L244 228 C232 200 220 172 210 146 Z" fill="#d07a74"/>
 <path d="M214 150 C224 175 236 200 248 226" stroke="#eab2aa" stroke-width="1.2" fill="none"/>
 <path d="M285 144 C296 150 306 160 310 168 L310 258.5 L288 258.5 C292 220 290 180 285 144 Z" fill="#cb6a64"/>
 <path d="M292 150 C300 180 304 220 304 258" stroke="#e8b0a8" stroke-width="1.5" fill="none" opacity="0.7"/>
 <path d="M183 214 C208 216 240 222 262 226 L264 258.5 L183 258.5 Z" fill="#c8605c"/>
 <g stroke="#e4a098" stroke-width="0.8" opacity="0.6"><path d="M186 222l70 10M186 232l72 8M186 242l74 6M186 252l74 4"/></g>
 <path d="M258 224 C266 220 282 220 292 224 L292 258.5 L258 258.5 Z" fill="#e6d2c8"/>
 <path d="M300 238 L323 238 L323 258.5 L300 258.5Z" fill="#c8625e"/>
 <path d="M309 65 L323 65 L323 167 L309 167 Z" fill="#e9d6c2"/>
 <g fill="#fafafa" stroke="#e0dcd8" stroke-width="0.6"><circle cx="319" cy="67" r="6"/><circle cx="319" cy="110" r="6"/><circle cx="319" cy="153" r="6"/><circle cx="321" cy="177" r="7"/><circle cx="321" cy="199" r="7"/><circle cx="321" cy="220" r="7"/></g>
 <g fill="#f5d400"><circle cx="192" cy="65" r="6"/><circle cx="319" cy="90" r="6"/><circle cx="319" cy="133" r="6"/></g>
 <path d="M271.5 65 V258" stroke="#86c8ac" stroke-width="1.4"/>
 <path d="M271.5 65 V258" stroke="#a8343c" stroke-width="1" stroke-dasharray="3 2"/>
 <g fill="#d8203a"><circle cx="272" cy="86.3" r="2"/><circle cx="272" cy="128.5" r="2"/><circle cx="272" cy="176.4" r="2"/><circle cx="272" cy="242.2" r="2"/><circle cx="272" cy="256.5" r="2"/></g>
 <g fill="none" stroke="#444" stroke-width="0.8">
  <path d="M188.5 95l6 -6.5M187 97h7M188.5 95l1.5 1"/>
  <path d="M188 116l7 7M195 116l-7 7"/><circle cx="188.5" cy="123.5" r="1.4"/><circle cx="194.5" cy="123.5" r="1.4"/><path d="M187.5 116v4M195.5 116v4"/>
  <path d="M187.5 146.5l4 -2.3 4 2.3v5.5l-4 2.3-4-2.3zM187.5 146.5l4 2.3 4-2.3M191.5 148.8v5.5"/>
  <path d="M195.5 178a4.2 4 0 1 0-2.5 3.8c-1-1 0-2 1-1.8c1 0.2 1.5-0.5 1.5-2z"/>
  <path d="M187 204.5a5 3 0 0 1 9 0a5 3 0 0 1-9 0M187 201.5l9 6"/>
 </g>
 <g fill="#c4c4c4"><rect x="188" y="101" width="7" height="1.8"/><rect x="188" y="130" width="7" height="1.8"/><rect x="188" y="159" width="7" height="1.8"/><rect x="188" y="187" width="7" height="1.8"/><rect x="188" y="214" width="7" height="1.8"/><rect x="188" y="243" width="7" height="1.8" fill="#d88"/></g>
 <path d="M187 234h9M191.5 229.5v9M189.5 231.5l2-2 2 2M189.5 236.5l2 2 2-2M189 232l-2 2 2 2M194 232l2 2-2 2" stroke="#eee" stroke-width="0.8" fill="none"/>
 </g>
</svg>
<div class="t" style="left:53.6px;top:22.5px;font-size:15px;letter-spacing:5.05px;color:#141414;font-weight:bold">预实验过程展示</div>
<div class="t" style="left:21px;top:67.5px;font-size:15px;color:#2a7ac0">风府：</div>
<div class="t" style="left:32px;top:185.5px;font-size:8px;color:#d42a20;font-weight:bold">GV16</div>
<div class="t" style="left:33px;top:194.5px;font-size:8px;color:#d42a20;font-weight:bold">风府</div>
<div class="t" style="left:35px;top:205px;font-size:7px;color:#22a050;font-weight:bold">交会穴</div>
<div class="t" style="left:17px;top:213px;font-size:6.5px;color:#22a050;font-weight:bold">(督脉、阳维之会)</div>
<div class="t" style="left:265px;top:77.5px;font-size:7px;color:#333">强间</div>
<div class="t" style="left:265px;top:117.5px;font-size:7px;color:#333">脑户</div>
<div class="t" style="left:264px;top:154.5px;font-size:7px;color:#2020d0">风府</div>
<div class="t" style="left:265px;top:167.5px;font-size:7px;color:#333">哑门</div>
<div class="t" style="left:265px;top:231.5px;font-size:7px;color:#333">大椎</div>
<div class="t" style="left:265px;top:246.5px;font-size:7px;color:#333">身柱</div>

<div class="t" style="left:356px;top:19.3px;font-size:12px;letter-spacing:2.6px;color:#2e82c6">层次解剖</div>
<div class="t" style="left:387.3px;top:47px;font-size:10px;letter-spacing:1.7px;color:#333">皮肤</div>
<div class="t" style="left:374.8px;top:72.4px;font-size:10px;letter-spacing:2.2px;color:#333">斜方肌腱</div>
<div class="t" style="left:375px;top:98px;font-size:10px;letter-spacing:2.2px;color:#333">头半棘肌</div>
<div class="t" style="left:381.4px;top:122.5px;font-size:10px;letter-spacing:2.2px;color:#333">项韧带</div>
<div class="t" style="left:356.4px;top:147.8px;font-size:10px;letter-spacing:2.2px;color:#333">头后大、小直肌</div>
<div class="t" style="left:356px;top:173px;font-size:10px;letter-spacing:2.2px;color:#333">第二、三颈神经</div>
<div class="t" style="left:356px;top:200px;font-size:12px;letter-spacing:2.6px;color:#2e82c6">针刺意外</div>
<div class="t" style="left:356px;top:221.3px;font-size:10px;letter-spacing:2.3px;color:#333">刺伤延髓、椎动脉导致出</div>
<div class="t" style="left:356px;top:234px;font-size:10px;letter-spacing:2.3px;color:#333">血，刺入枕骨大孔会伤及</div>
<div class="t" style="left:356px;top:246.6px;font-size:10px;letter-spacing:2.3px;color:#333">小脑或延髓</div>
<svg class="a" style="left:390px;top:55px" width="16" height="125"><g fill="none" stroke="#b01e2e" stroke-width="1.3">
 <path d="M9 2.7V15M5.5 11.5L9 15.5 12.5 11.5"/>
 <path d="M9 28V41M5.5 37.5L9 41.5 12.5 37.5"/>
 <path d="M8 52.7V65.5M4.5 62L8 66 11.5 62"/>
 <path d="M7 77V90.5M3.5 87L7 91 10.5 87"/>
 <path d="M7 103V116.5M3.5 113L7 117 10.5 113"/>
</g></svg>
</div>

<!-- status bar -->
<div class="a" style="left:1px;top:494.5px;width:818px;height:13.5px;background:#f3f2f1"></div>
<div class="t" style="left:6px;top:497.5px;font-size:8px;color:#555">幻灯片 第 9 张，共 23 张</div>
<div class="t" style="left:111px;top:497.5px;font-size:8px;color:#555">中文(中国)</div>
<svg class="a" style="left:155px;top:496px" width="10" height="10"><g fill="none" stroke="#666" stroke-width="1"><circle cx="5" cy="2.5" r="1.5"/><path d="M1 4.5h8M5 4.5v2.5l-2 2.5M5 7l2 2.5"/></g></svg>
<div class="t" style="left:166px;top:497.5px;font-size:8px;color:#555">辅助功能: 不可用</div>
<svg class="a" style="left:551px;top:496px" width="10" height="11"><g fill="none" stroke="#555" stroke-width="1"><path d="M2 4l3-3 3 3M0 7h10M0 9.5h10"/></g></svg>
<div class="t" style="left:562px;top:497.5px;font-size:8px;color:#555">备注</div>
<div class="a" style="left:590px;top:494.5px;width:24.5px;height:13.5px;background:#d6d6d6"></div>
<svg class="a" style="left:580px;top:494px" width="240" height="14"><g fill="none" stroke="#555" stroke-width="1">
 <rect x="16.5" y="3.5" width="9" height="7"/><path d="M18.5 5v4"/>
 <rect x="42.5" y="3.5" width="3.5" height="3"/><rect x="48.5" y="3.5" width="3.5" height="3"/><rect x="42.5" y="8.5" width="3.5" height="3"/><rect x="48.5" y="8.5" width="3.5" height="3"/>
 <path d="M68.5 3.5h9v8h-9zM73 3.5v8M70 6h1.5M74.5 6h1.5"/>
 <path d="M93.5 3.5h9v5h-9zM98 8.5v3M95.5 11.5h5"/>
 <path d="M114 7h5M123 7h63M189 7h5M191.5 4.5v5" stroke="#666"/>
 <path d="M226 3l2-2 2 2M226 11l2 2 2-2M224 5l-2 2 2 2M232 5l2 2-2 2" stroke="#555"/>
 <rect x="227" y="5" width="3" height="4" stroke="#555"/>
</g>
<rect x="141" y="3" width="3.5" height="8" fill="#555"/><rect x="158" y="5.5" width="2" height="3" fill="#555"/>
</svg>
<div class="t" style="left:782px;top:497.5px;font-size:8px;color:#555">62%</div>

<!-- taskbar -->
<div class="a" style="left:1px;top:508px;width:818px;height:25px;background:#cfdfe6"></div>
<svg class="a" style="left:10px;top:515px" width="12" height="12"><g fill="#111"><rect x="0" y="0" width="5.3" height="5.3"/><rect x="6.3" y="0" width="5.3" height="5.3"/><rect x="0" y="6.3" width="5.3" height="5.3"/><rect x="6.3" y="6.3" width="5.3" height="5.3"/></g></svg>
<div class="a" style="left:32px;top:508px;width:218px;height:25px;background:#fff"></div>
<svg class="a" style="left:38px;top:514px" width="14" height="14"><circle cx="8.5" cy="5.5" r="4" fill="none" stroke="#333" stroke-width="1.1"/><path d="M5.6 8.4L1.5 12.5" stroke="#333" stroke-width="1.2"/></svg>
<div class="t" style="left:57px;top:516.8px;font-size:10px;letter-spacing:0.25px;color:#333">在这里输入你要搜索的内容</div>

<svg class="a" style="left:250px;top:508px" width="569" height="25">
 <!-- task view -->
 <g fill="none" stroke="#222" stroke-width="1"><rect x="11.5" y="8.5" width="9" height="9"/><path d="M9 7v11M23 7v11"/></g>
 <!-- explorer -->
 <path d="M41 8h6l1.5 1.5H56v9H41z" fill="#f0b429"/><rect x="41" y="11" width="15" height="7.5" fill="#ffd35c"/><rect x="45.5" y="13" width="6" height="5.5" fill="#2a7fd6"/>
 <!-- mail -->
 <path d="M74 10l7.5-4 7.5 4v9H74z" fill="#1b6ac9"/><rect x="74" y="11" width="15" height="8" fill="#3d9df0"/><path d="M74 11l7.5 5 7.5-5" fill="none" stroke="#fff" stroke-width="1"/>
 <!-- edge -->
 <circle cx="114" cy="12.5" r="7.5" fill="#1aa0d8"/><path d="M107 14a7.5 7.5 0 0 0 14 2c-2 2-6 2-7-1c3 1 5 0 5-2c-1-4-7-4-9 0c-1-2 0-5 3-6c-3 0-6 3-6 7z" fill="#39c46a"/><path d="M110 12a4 4 0 0 1 8 1.5c-1 1.5-4 2-5 0" fill="#fff" opacity="0.9"/>
 <!-- tencent meeting -->
 <rect x="136.5" y="5.5" width="15" height="14" rx="2" fill="#1c6ef2"/><path d="M139 15l3-4 2.5 2.5 2.5-3 2.5 4.5" fill="none" stroke="#fff" stroke-width="1.6"/>
 <rect x="133" y="23" width="25" height="2" fill="#1d73d8"/>
 <!-- ppt active -->
 <rect x="162" y="0" width="30" height="25" fill="#e4edf1"/>
 <circle cx="177" cy="12.5" r="7.5" fill="#d24b2c"/><path d="M177 5a7.5 7.5 0 0 1 7.5 7.5h-7.5z" fill="#ff8f6b"/><rect x="169" y="8" width="7" height="9" rx="1" fill="#c13b1b"/><text x="170.3" y="15.5" font-size="7" font-family="Liberation Sans" font-weight="bold" fill="#fff">P</text>
 <rect x="162" y="23" width="30" height="2" fill="#1d73d8"/>
 <!-- wechat -->
 <rect x="194" y="0" width="31" height="25" fill="#f4a97a"/>
 <ellipse cx="206" cy="11" rx="6" ry="5" fill="#3bb34a"/><ellipse cx="213" cy="14.5" rx="5" ry="4.3" fill="#f0f0f0"/>
 <rect x="194" y="23" width="31" height="2" fill="#e58a50"/>
 <!-- tray -->
 <path d="M352 4c-2 3-2.5 9-0.5 15l0.5 2.5l0.5-2.5c2-6 1.5-12-0.5-15z" fill="#7cc0ee" stroke="#2c8fd8" stroke-width="0.6"/>
 <path d="M413.5 14l3.5-3.5 3.5 3.5" fill="none" stroke="#222" stroke-width="1"/>
 <rect x="429.5" y="7" width="4.5" height="11" rx="1" fill="#111"/>
 <rect x="442.5" y="10.5" width="10" height="5" fill="none" stroke="#222"/><rect x="443.5" y="11.5" width="6" height="3" fill="#222"/><rect x="453" y="12" width="1" height="2" fill="#222"/>
 <path d="M458 11h2l3-2.5v8l-3-2.5h-2z" fill="none" stroke="#222" stroke-width="0.9"/><path d="M465 10.5a3 3 0 0 1 0 4.5M467 9a5.5 5.5 0 0 1 0 7.5" fill="none" stroke="#222" stroke-width="0.9"/>
 <path d="M474 17a8 8 0 0 1 8-8M476.5 17a5.5 5.5 0 0 1 5.5-5.5M479 17a3 3 0 0 1 3-3" fill="none" stroke="#333" stroke-width="0.9"/>
 <path d="M542 7h10v8h-4l-2 2.5V15h-4z" fill="#111"/><path d="M544 10h6M544 12.5h5" stroke="#ddd" stroke-width="0.8"/>
 <rect x="568" y="0" width="1" height="25" fill="#b9cbd2"/>
</svg>
<div class="t" style="left:616px;top:517px;font-size:9px;color:#222">雨快停了</div>
<div class="t" style="left:750px;top:511px;font-size:8.5px;color:#222">19:51</div>
<div class="t" style="left:740px;top:522px;font-size:9px;color:#222">2022/4/23</div>

<!-- chat overlay -->
<div class="a" style="left:14px;top:470.5px;width:158px;height:33px;border-radius:4px;background:rgba(72,72,72,0.72)"></div>
<div class="a" style="left:25px;top:476.5px;width:19px;height:19px;border-radius:50%;background:rgba(225,225,225,0.85)"></div>
<svg class="a" style="left:25px;top:476.5px" width="19" height="19"><circle cx="6.5" cy="8" r="1.2" fill="#777"/><circle cx="12.5" cy="8" r="1.2" fill="#777"/><path d="M5 11h9a4.5 4.5 0 0 1-9 0z" fill="#8a8a8a"/></svg>
<div class="a" style="left:50px;top:476px;width:1px;height:21px;background:rgba(200,200,200,0.5)"></div>
<div class="t" style="left:66px;top:478.5px;font-size:14px;color:#f2f2f2">说点什么...</div>
<svg class="a" style="left:126px;top:486px" width="8" height="5"><path d="M0 0h7l-3.5 4z" fill="#222"/></svg>
<div class="a" style="left:141px;top:476px;width:1px;height:21px;background:rgba(200,200,200,0.5)"></div>
<svg class="a" style="left:148px;top:480px" width="10" height="14"><path d="M7 1.5l-5 5.5 5 5.5" fill="none" stroke="#ddd" stroke-width="1.2"/></svg>

<!-- thumbnail nav circle -->
<div class="a" style="left:16.8px;top:237.7px;width:42.2px;height:42.2px;border-radius:50%;background:rgba(150,150,150,0.55)"></div>
<svg class="a" style="left:28px;top:248.5px" width="18" height="22"><path d="M14 2L5 11l9 9" fill="none" stroke="#fafafa" stroke-width="1.3"/></svg>

<!-- mouse cursor -->
<svg class="a" style="left:758px;top:311px" width="12" height="16"><path d="M1 1v11l3-2.5 2 4.5 2-1-2-4.5h4z" fill="#fff" stroke="#333" stroke-width="0.8"/></svg>


<!-- right panel -->
<div class="a" style="left:819px;top:0;width:194px;height:585px;background:linear-gradient(90deg,#55585c 0px,#484b4f 10px,#393b3f 40px,#222326 100px,#0c0c0d 170px,#000 190px)"></div>
<div class="a" style="left:819px;top:0;width:4px;height:585px;background:#5a5d61"></div>
<div class="a" style="left:821.5px;top:291px;width:1.3px;height:27px;background:#9a9da0"></div>
<div class="a" style="left:825px;top:291px;width:1.3px;height:27px;background:#9a9da0"></div>

<!-- tile 1 -->
<div class="a" style="left:829.5px;top:-20px;width:176px;height:100px;border-radius:3px;background:#2a2b2e;border:1px solid #4a4c50"></div>
<div class="a" style="left:830.5px;top:0;width:172px;height:78px;overflow:hidden;background:linear-gradient(180deg,#d8dbdb 0px,#dde0e0 40px,#d4d7d7 54px,#4a3430 56px,#3c2a26 62px,#34343a 78px)">
 <svg class="a" style="left:0;top:0" width="174" height="78">
  <!-- left boy -->
  <path d="M0 78 L0 58 C8 52 26 50 42 56 L54 78Z" fill="#2e2e34"/>
  <ellipse cx="20" cy="44" rx="17" ry="13" fill="#b8988a"/>
  <path d="M0 38 C-2 22 8 15 20 15 C34 15 42 22 40 38 C36 32 28 29 18 30 C10 31 4 35 0 38Z" fill="#121010"/>
  <path d="M4 44h11M23 44h12" stroke="#7a7272" stroke-width="1"/>
  <!-- middle girl -->
  <path d="M64 78 C66 52 66 30 74 20 C82 12 104 12 112 20 C120 30 120 52 124 78Z" fill="#141111"/>
  <ellipse cx="95" cy="44" rx="16" ry="21" fill="#dcbcaa"/>
  <path d="M78 34 C80 20 88 15 96 15 C106 15 112 22 112 34 C106 24 98 22 96 20 C92 24 86 28 78 34Z" fill="#141111"/>
  <path d="M84 78 C86 70 90 66 95 66 C101 66 104 70 106 78Z" fill="#c6d0dc"/>
  <ellipse cx="87" cy="40" rx="5.5" ry="4" fill="none" stroke="#a0a0a0" stroke-width="0.8"/><ellipse cx="103" cy="40" rx="5.5" ry="4" fill="none" stroke="#a0a0a0" stroke-width="0.8"/>
  <ellipse cx="95" cy="55" rx="3.5" ry="1.6" fill="#b86a66"/>
  <!-- right girl -->
  <path d="M136 78 C138 66 146 60 156 58 L174 56 L174 78Z" fill="#1f2440"/>
  <path d="M146 62 C150 66 154 70 156 78 L148 78Z" fill="#d8dde6"/>
  <ellipse cx="168" cy="38" rx="16" ry="22" fill="#e2c0ae"/>
  <path d="M148 34 C144 14 156 2 170 1 L174 1 L174 18 C166 16 156 20 152 36Z" fill="#161314"/>
  <ellipse cx="172" cy="55" rx="4" ry="2" fill="#b86060"/>
 </svg>
 <div class="a" style="left:0;top:53px;width:65px;height:25px;background:rgba(40,40,40,0.55)"></div>
</div>
<svg class="a" style="left:835px;top:57px" width="16" height="18"><rect x="5" y="1" width="6" height="10" rx="3" fill="#f2f2f2"/><path d="M2.5 8a5.5 5.5 0 0 0 11 0" fill="none" stroke="#f2f2f2" stroke-width="1.6"/><path d="M8 13.5v3M5.5 16.5h5" stroke="#f2f2f2" stroke-width="1.6"/></svg>
<div class="t" style="left:858px;top:60px;font-size:12px;color:#f0f0f0">04队长</div>
<div class="a" style="left:881.3px;top:10px;width:80px;height:22px;border-radius:3px;background:rgba(110,110,110,0.55)"></div>
<svg class="a" style="left:911px;top:16px" width="20" height="10"><path d="M2 9l8-7 8 7" fill="none" stroke="#e8e8e8" stroke-width="1.4"/></svg>

<!-- tile 2 (active) -->
<div class="a" style="left:828px;top:89.5px;width:178px;height:100.5px;border-radius:4px;background:#292a2d;border:1.5px solid #23a852"></div>
<div class="a" style="left:889.6px;top:91.6px;width:54.4px;height:96px;overflow:hidden;background:#f8f8f7">
 <svg class="a" style="left:0;top:0" width="55" height="96">
  <path d="M0 96 L0 71 C6 69 14 68 20 70 L27 84 L36 70 C42 68 50 69 55 71 L55 96Z" fill="#a8262c"/>
  <path d="M17 70 L24 88 L27 82 Z M38 70 L31 88 L28 82Z" fill="#e6e0dc"/>
  <ellipse cx="29" cy="53" rx="19" ry="30" fill="#e9c2b2"/>
  <path d="M8 44 C6 28 14 19 30 19 C44 19 52 28 50 44 C48 36 44 31 38 30 C30 29 24 31 18 30 C12 32 10 38 8 44Z" fill="#1e1d28"/>
  <path d="M12 55h13M33 55h13M25 55.5h8" stroke="#6a6060" stroke-width="0.8"/>
  <ellipse cx="29" cy="72" rx="5" ry="2" fill="#b06a66"/>
 </svg>
</div>
<div class="a" style="left:830px;top:162.3px;width:55px;height:25px;background:#111"></div>
<svg class="a" style="left:835px;top:166px" width="16" height="18"><rect x="5" y="1" width="6" height="10" rx="3" fill="#f2f2f2"/><rect x="5" y="5" width="6" height="6" rx="0" fill="#2ecc40"/><path d="M5 5h6v3a3 3 0 0 1-6 0z" fill="#2ecc40"/><path d="M2.5 8a5.5 5.5 0 0 0 11 0" fill="none" stroke="#f2f2f2" stroke-width="1.6"/><path d="M8 13.5v3M5.5 16.5h5" stroke="#f2f2f2" stroke-width="1.6"/></svg>
<div class="t" style="left:857px;top:169px;font-size:12px;color:#f0f0f0">远行</div>

<!-- tile 3 -->
<div class="a" style="left:829.5px;top:199.3px;width:176.5px;height:99.7px;border-radius:3px;background:#202124;border:1px solid #4a4d51"></div>
<div class="a" style="left:889.4px;top:212.5px;width:55.6px;height:55.6px;border-radius:50%;background:radial-gradient(circle at 50% 50%,#f8f0b0 0%,#f2e68c 70%,#ecdc78 100%)"></div>
<svg class="a" style="left:889.5px;top:212px" width="56" height="56">
 <ellipse cx="28" cy="45" rx="8" ry="7.5" fill="#fbf2e2" stroke="#d8b890" stroke-width="0.5"/>
 <ellipse cx="30.5" cy="46" rx="3" ry="3.5" fill="#ffffff"/>
 <ellipse cx="28.8" cy="27.2" rx="19.4" ry="14.4" fill="#fbefd6" stroke="#d8b890" stroke-width="0.6"/>
 <circle cx="21.6" cy="27.5" r="4.8" fill="#4a2414"/><circle cx="38.3" cy="27.5" r="4.8" fill="#4a2414"/>
 <circle cx="20.5" cy="26" r="1.3" fill="#fff"/><circle cx="37.2" cy="26" r="1.3" fill="#fff"/>
 <ellipse cx="30" cy="33" rx="2.3" ry="3.6" fill="#f0a0a0" stroke="#b06060" stroke-width="0.4"/>
 <ellipse cx="15" cy="33" rx="2.5" ry="1.2" fill="#f4b8c8"/><ellipse cx="45" cy="31" rx="2.5" ry="1.2" fill="#f4b8c8"/>
 <path d="M28 13 C25 10 22 9 20 11 C22 13 25 14 28 13 C30 10 33 8 36 10 C34 13 31 14 28 13" fill="#98b848"/>
 <circle cx="10" cy="22" r="1.4" fill="#b8c0e0"/><circle cx="45" cy="40" r="1.4" fill="#b8c0e0"/><circle cx="48" cy="30" r="1.2" fill="#f0c8b0"/><circle cx="38" cy="10" r="1.2" fill="#b8c0e0"/><circle cx="6" cy="30" r="1.2" fill="#b8c0e0"/>
</svg>
<div class="a" style="left:830.5px;top:272.8px;width:93px;height:24px;background:#111"></div>
<div class="a" style="left:831px;top:273px;width:23px;height:23.5px;background:#f5821f"></div>
<svg class="a" style="left:831px;top:273px" width="23" height="23"><circle cx="11.5" cy="8" r="3.6" fill="#fff"/><path d="M4.5 19a7 5.5 0 0 1 14 0z" fill="#fff"/></svg>
<svg class="a" style="left:861px;top:276px" width="16" height="18"><rect x="5" y="1" width="6" height="10" rx="3" fill="#f2f2f2"/><path d="M2.5 8a5.5 5.5 0 0 0 11 0" fill="none" stroke="#f2f2f2" stroke-width="1.6"/><path d="M8 13.5v3M5.5 16.5h5" stroke="#f2f2f2" stroke-width="1.6"/><path d="M1.5 15.5L14 2.5" stroke="#e8463c" stroke-width="1.5"/></svg>
<div class="t" style="left:883px;top:278.5px;font-size:12px;color:#f0f0f0">曾燕琼</div>

<!-- tile 4 -->
<div class="a" style="left:829.5px;top:308.6px;width:176.5px;height:99.7px;border-radius:3px;background:#202124;border:1px solid #4a4d51"></div>
<div class="a" style="left:890px;top:323px;width:55.6px;height:55.6px;border-radius:50%;background:#4b8dcb"></div>
<svg class="a" style="left:889.5px;top:323.5px" width="56" height="56">
 <path d="M2.7 21.2 L43.3 7.3 C45 7 46 7.5 46.5 9 L51.1 31 C51.3 32.5 50.5 33.5 49 34 L11.1 46.2 Z" fill="#fce6d2" stroke="#e0b8a0" stroke-width="0.6"/>
 <path d="M4 22 L17 17.5 M33 12 L44 8.5" stroke="#e06a70" stroke-width="1.3"/>
 <path d="M18 17 L32 12.5" stroke="#6aa0e0" stroke-width="1"/>
 <path d="M20 27 L40 20 M21 35 L42 28" stroke="#e8b060" stroke-width="0.6"/>
 <rect x="23" y="26" width="10" height="3" fill="#b07060" opacity="0.7" transform="rotate(-18 28 27.5)"/>
 <path d="M38 18 h7 v3 a3.5 3.5 0 0 1 -7 0z M40.5 24 h2 v3 h-2z" fill="#e8b020"/>
 <rect x="10" y="27" width="10" height="13" fill="#fff" transform="rotate(-18 15 33)"/>
 <circle cx="15" cy="33" r="4.5" fill="#f3c9a8"/><path d="M10.5 31 C11 27 18 27 19.5 31 C17 29.5 13 29.5 10.5 31Z" fill="#6a3a20"/><circle cx="16" cy="35.5" r="1.3" fill="#e02020"/>
 <path d="M6 41 C9 38 14 38 17 42 L17 50 C13 52 8 50 6 46Z" fill="#f6cdd0" stroke="#c89090" stroke-width="0.5"/>
 <path d="M13 49 L19 47 L21 55 L14 55Z" fill="#9a70d0"/>
</svg>
<div class="a" style="left:830.5px;top:383px;width:69.5px;height:24px;background:#111"></div>
<svg class="a" style="left:835px;top:385.5px" width="16" height="18"><rect x="5" y="1" width="6" height="10" rx="3" fill="#f2f2f2"/><path d="M2.5 8a5.5 5.5 0 0 0 11 0" fill="none" stroke="#f2f2f2" stroke-width="1.6"/><path d="M8 13.5v3M5.5 16.5h5" stroke="#f2f2f2" stroke-width="1.6"/><path d="M1.5 15.5L14 2.5" stroke="#e8463c" stroke-width="1.5"/></svg>
<div class="t" style="left:857px;top:389px;font-size:12px;color:#f0f0f0">03队长</div>

<!-- tile 5 -->
<div class="a" style="left:829.5px;top:418.8px;width:176.5px;height:99.2px;border-radius:3px;background:#202124;border:1px solid #4a4d51"></div>
<div class="a" style="left:889.4px;top:433.5px;width:55.6px;height:55.6px;border-radius:50%;background:#fbfbfb"></div>
<svg class="a" style="left:889.5px;top:433px" width="56" height="56">
 <path d="M6 22 C8 14 14 8 22 6 C28 5 32 8 30 12 C24 14 16 18 10 26Z" fill="#c8dcf0" opacity="0.9"/>
 <ellipse cx="17.2" cy="18.8" rx="5" ry="4.2" fill="#2a2a2a" transform="rotate(-30 17.2 18.8)"/>
 <ellipse cx="35.5" cy="8.8" rx="3.5" ry="2.5" fill="#333" transform="rotate(20 35.5 8.8)"/>
 <ellipse cx="8.8" cy="39.9" rx="6.5" ry="5" fill="#3a3a3a" transform="rotate(20 8.8 39.9)"/>
 <ellipse cx="37" cy="34.4" rx="14" ry="15.5" fill="#fdfdfd" stroke="#b8b4d8" stroke-width="1.6"/>
 <ellipse cx="32.2" cy="38.3" rx="5.5" ry="6" fill="#2a2a2a" transform="rotate(-20 32.2 38.3)"/>
 <ellipse cx="46" cy="35.5" rx="2.5" ry="5" fill="#333"/>
 <circle cx="37.5" cy="40" r="0.9" fill="#222"/>
 <circle cx="52.5" cy="34.5" r="1.2" fill="#f08090"/>
</svg>
<div class="a" style="left:830.5px;top:492.8px;width:77.5px;height:24px;background:#111"></div>
<svg class="a" style="left:835px;top:495px" width="16" height="18"><rect x="5" y="1" width="6" height="10" rx="3" fill="#f2f2f2"/><path d="M2.5 8a5.5 5.5 0 0 0 11 0" fill="none" stroke="#f2f2f2" stroke-width="1.6"/><path d="M8 13.5v3M5.5 16.5h5" stroke="#f2f2f2" stroke-width="1.6"/><path d="M1.5 15.5L14 2.5" stroke="#e8463c" stroke-width="1.5"/></svg>
<div class="t" style="left:857.5px;top:498.5px;font-size:12px;color:#f0f0f0">16成员3</div>

<!-- tile 6 -->
<div class="a" style="left:829.5px;top:528.6px;width:176.5px;height:70px;border-radius:3px;background:#202124;border:1px solid #4a4d51"></div>
<div class="a" style="left:889.5px;top:542.3px;width:55.5px;height:55.5px;border-radius:50%;background:#5a6aa8;overflow:hidden">
 <svg width="56" height="56"><path d="M0 0 H56 V30 C50 36 44 34 40 30 C34 34 22 34 16 30 C10 34 4 34 0 32Z" fill="#2c3464"/><rect x="0" y="0" width="56" height="8" fill="#4a5890"/><path d="M18 32 C22 28 36 28 42 32 L40 40 L20 40Z" fill="#f2dcc4"/><path d="M6 42 C14 38 22 38 28 42 C34 38 44 38 52 44 L56 56 L0 56Z" fill="#4c68b0"/><path d="M48 36 C52 40 54 46 52 52" stroke="#f0e0d0" stroke-width="2" fill="none"/></svg>
</div>
<div class="a" style="left:881.4px;top:550.7px;width:80px;height:22.3px;border-radius:3px;background:rgba(22,22,22,0.6)"></div>
<svg class="a" style="left:913px;top:557.5px" width="16" height="10"><path d="M2 1.5l6.2 6.2 6.2-6.2" fill="none" stroke="#e8e8e8" stroke-width="1.3"/></svg>

<!-- expand tab -->
<div class="a" style="left:801px;top:281.4px;width:21px;height:44px;border-radius:4px 0 0 4px;background:rgba(88,88,88,0.95)"></div>
<div class="a" style="left:808px;top:291px;width:11px;height:10px;background:#6a6a6a"></div>
<svg class="a" style="left:805px;top:295px" width="10" height="17"><path d="M2 2l6 6.5-6 6.5" fill="none" stroke="#cfcfcf" stroke-width="1.3"/></svg>
<div class="a" style="left:821.5px;top:291px;width:1.3px;height:27px;background:#9a9da0"></div>
<div class="a" style="left:825px;top:291px;width:1.3px;height:27px;background:#9a9da0"></div>








<div class="a" style="left:0;top:584px;width:1013px;height:1px;background:#dcdcdc"></div>
</body></html>
